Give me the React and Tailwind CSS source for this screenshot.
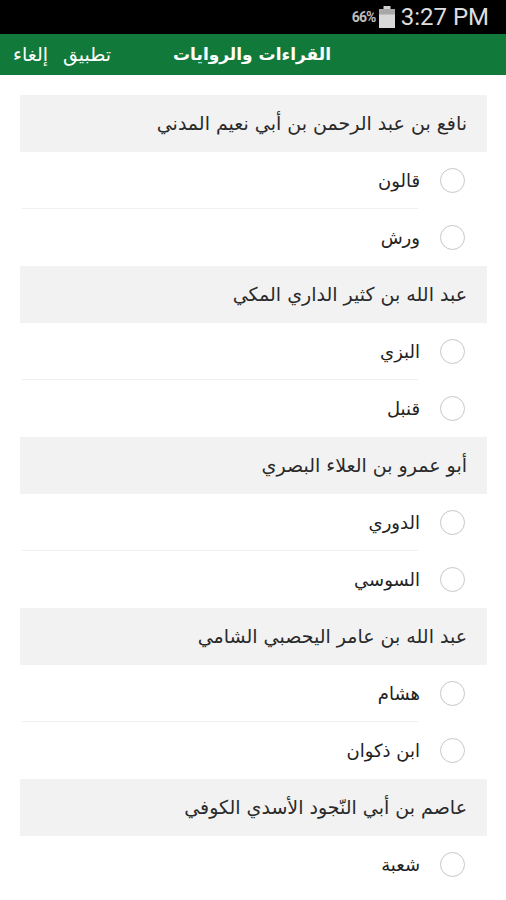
import React from 'react';

const groups = [
  { title: 'نافع بن عبد الرحمن بن أبي نعيم المدني', options: ['قالون', 'ورش'] },
  { title: 'عبد الله بن كثير الداري المكي', options: ['البزي', 'قنبل'] },
  { title: 'أبو عمرو بن العلاء البصري', options: ['الدوري', 'السوسي'] },
  { title: 'عبد الله بن عامر اليحصبي الشامي', options: ['هشام', 'ابن ذكوان'] },
  { title: 'عاصم بن أبي النّجود الأسدي الكوفي', options: ['شعبة'] },
];

const arabic = { fontFamily: '"DejaVu Sans", "Noto Sans", sans-serif' };

function StatusBar() {
  return (
    <div className="h-[34px] bg-black flex items-center justify-end pr-[17px]">
      <span className="text-[14px] font-bold text-[#bdbdbd] tracking-[-0.8px]" style={{ fontFamily: 'Roboto, sans-serif' }}>
        66%
      </span>
      {/* battery */}
      <svg width="16" height="22" viewBox="0 0 16 22" className="ml-[3px] mr-[6px]">
        <rect x="4.5" y="0" width="7" height="3" fill="#cfcfcf" />
        <rect x="0" y="3" width="16" height="19" fill="#a8a8a8" />
        <rect x="0" y="8.5" width="16" height="13.5" fill="#d8d8d8" />
      </svg>
      <span className="text-[24px] text-[#dedede] leading-none" style={{ fontFamily: 'Roboto, sans-serif' }}>
        3:27 PM
      </span>
    </div>
  );
}

function TopBar() {
  return (
    <div dir="rtl" className="h-[41px] bg-[#117a3b] flex items-center text-white" style={arabic}>
      <div className="w-[175px]" />
      <div className="text-[17px] font-bold">القراءات والروايات</div>
      <div className="flex-1" />
      <div className="flex items-center gap-[15px] pl-[13px] text-[19px]">
        <span>تطبيق</span>
        <span>إلغاء</span>
      </div>
    </div>
  );
}

function Radio() {
  return <div className="w-[25px] h-[25px] rounded-full border border-[#c8c8c8] bg-white shrink-0" />;
}

function Group({ title, options }) {
  return (
    <div>
      <div className="h-[57px] bg-[#f2f2f2] flex items-center pr-[20px] text-[19px] text-[#2a2a2a]">
        {title}
      </div>
      {options.map((opt, i) => {
        const last = i === options.length - 1;
        return (
          <div key={opt}>
            <div className={`${last ? 'h-[57px]' : 'h-[56px]'} flex items-center pr-[22px] gap-[20px] text-[18px] text-[#222]`}>
              <Radio />
              <span>{opt}</span>
            </div>
            {!last && <div className="h-px bg-[#efefef] mr-[69px] ml-[2px]" />}
          </div>
        );
      })}
    </div>
  );
}

export default function App() {
  return (
    <div className="w-[506px] h-[900px] overflow-hidden bg-white">
      <StatusBar />
      <TopBar />
      <div dir="rtl" className="pt-[20px] pl-[20px] pr-[19px]" style={arabic}>
        {groups.map((g) => (
          <Group key={g.title} {...g} />
        ))}
      </div>
    </div>
  );
}
